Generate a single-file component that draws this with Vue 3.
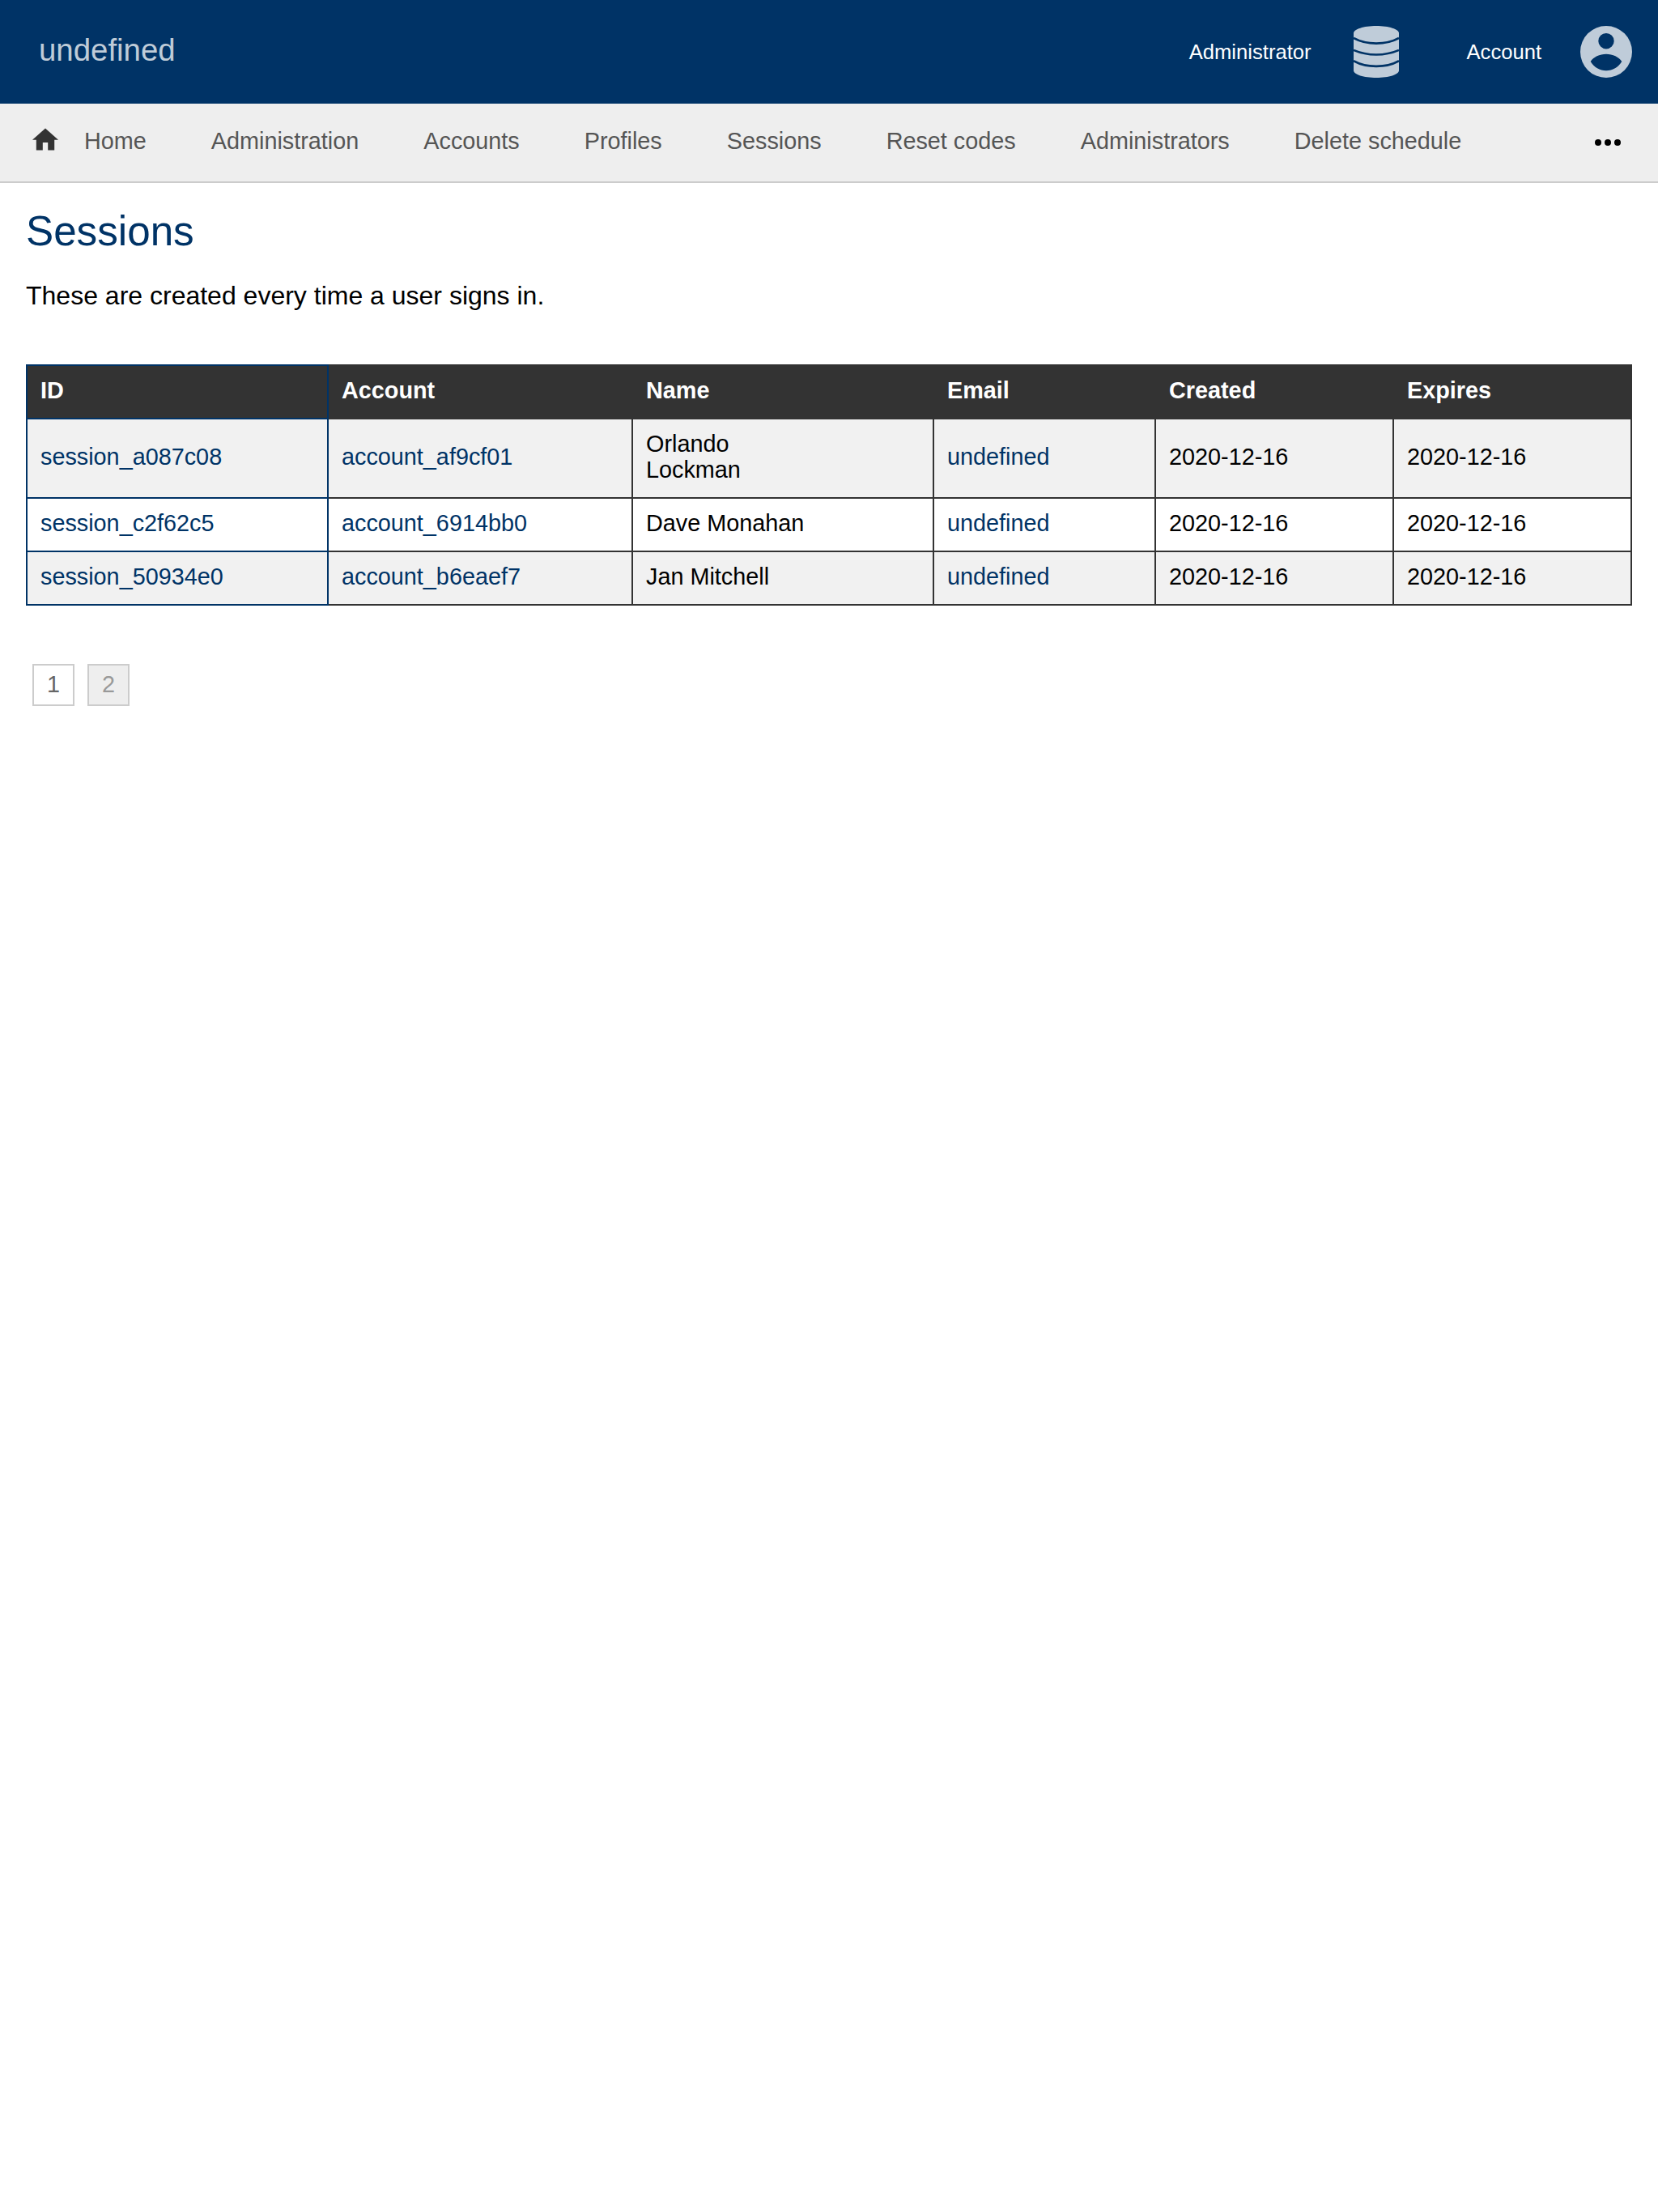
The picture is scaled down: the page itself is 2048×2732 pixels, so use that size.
<script setup>
const navItems = ['Home', 'Administration', 'Accounts', 'Profiles', 'Sessions', 'Reset codes', 'Administrators', 'Delete schedule']
const columns = ['ID', 'Account', 'Name', 'Email', 'Created', 'Expires']
const rows = [
  { id: 'session_a087c08', account: 'account_af9cf01', name: 'Orlando\nLockman' },
  { id: 'session_c2f62c5', account: 'account_6914bb0', name: 'Dave Monahan' },
  { id: 'session_50934e0', account: 'account_b6eaef7', name: 'Jan Mitchell' }
]
</script>

<template>
  <div class="page">
    <header class="topbar">
      <span class="brand">undefined</span>
      <div class="top-actions">
        <a class="top-link admin-link">
          <span>Administrator</span>
          <svg class="db-icon" viewBox="0 0 56 64" aria-hidden="true">
            <path class="db-body" d="M0 9C0 4 12.5 0 28 0S56 4 56 9V55C56 60 43.5 64 28 64S0 60 0 55Z" />
            <path class="db-line" d="M0 15C8 19.5 18 21.6 28 21.6S48 19.5 56 15" />
            <path class="db-line" d="M0 29.9C8 33.4 18 35.5 28 35.5S48 33.4 56 29.9" />
            <path class="db-line" d="M0 43.2C8 47.8 18 49.9 28 49.9S48 47.8 56 43.2" />
          </svg>
        </a>
        <a class="top-link account-link">
          <span>Account</span>
          <svg class="user-icon" viewBox="0 0 64 64" aria-hidden="true">
            <path fill="currentColor" fill-rule="evenodd" d="M32 0a32 32 0 1 1 0 64a32 32 0 1 1 0-64zM32 9a9.7 9.7 0 1 0 0 19.4a9.7 9.7 0 1 0 0-19.4zM12.7 44C16 38.5 24 34.7 32 34.7C40 34.7 48 38.5 51.3 44C47 51 40 55.3 32 55.3C24 55.3 17 51 12.7 44z" />
          </svg>
        </a>
      </div>
    </header>

    <nav class="navbar">
      <svg class="home-icon" viewBox="2 3 20 17" aria-hidden="true">
        <path fill="currentColor" d="M10 20v-6h4v6h5v-8h3L12 3 2 12h3v8z" />
      </svg>
      <a v-for="item in navItems" :key="item" class="nav-link">{{ item }}</a>
      <svg class="more-icon" viewBox="0 0 32 8" aria-hidden="true">
        <circle cx="4" cy="4" r="4" />
        <circle cx="16" cy="4" r="4" />
        <circle cx="28" cy="4" r="4" />
      </svg>
    </nav>

    <main class="content">
      <h1 class="title">Sessions</h1>
      <p class="intro">These are created every time a user signs in.</p>

      <table class="sessions">
        <colgroup>
          <col class="c-id" /><col class="c-account" /><col class="c-name" />
          <col class="c-email" /><col class="c-date" /><col class="c-date" />
        </colgroup>
        <thead>
          <tr><th v-for="col in columns" :key="col">{{ col }}</th></tr>
        </thead>
        <tbody>
          <tr v-for="row in rows" :key="row.id">
            <td><a>{{ row.id }}</a></td>
            <td><a>{{ row.account }}</a></td>
            <td class="name">{{ row.name }}</td>
            <td><a>undefined</a></td>
            <td>2020-12-16</td>
            <td>2020-12-16</td>
          </tr>
        </tbody>
      </table>

      <div class="pagination">
        <a class="page-btn">1</a>
        <a class="page-btn current">2</a>
      </div>
    </main>
  </div>
</template>

<style>
html, body { margin: 0; background: #fff; }
</style>

<style scoped>
.page {
  min-height: 2732px;
  font-family: "Liberation Sans", Arial, sans-serif;
  font-size: 32px;
  color: #000;
  background: #fff;
}
.topbar {
  height: 128px;
  background: #036;
  display: flex;
  align-items: center;
  justify-content: space-between;
  padding: 0 32px 0 48px;
}
.brand {
  font-size: 38.4px;
  color: rgba(255, 255, 255, 0.75);
  margin-bottom: 4px;
}
.top-actions {
  display: flex;
  align-items: center;
}
.top-link {
  display: flex;
  align-items: center;
  font-size: 25.6px;
  color: #fff;
}
.admin-link { gap: 52px; margin-right: 84px; }
.account-link { gap: 48px; }
.db-icon { width: 56px; height: 64px; display: block; }
.db-body { fill: #bfccd9; }
.db-line { fill: none; stroke: #036; stroke-width: 2.6; }
.user-icon { width: 64px; height: 64px; color: #bfccd9; display: block; }
.navbar {
  height: 92px;
  background: #eee;
  border-bottom: 2px solid #ccc;
  display: flex;
  align-items: center;
  padding: 0 46px 4px 40px;
  gap: 80px;
  font-size: 28.8px;
  color: #555;
}
.home-icon {
  width: 32px;
  height: 28px;
  color: #333;
  margin: 0 -48px 4px 0;
  flex: none;
}
.more-icon {
  width: 32px;
  height: 8px;
  fill: #000;
  margin: 4px 0 0 auto;
  flex: none;
}
.content { padding: 30px 32px 0; }
.title {
  margin: 0 0 32px;
  font-size: 51.2px;
  font-weight: 400;
  color: #036;
}
.intro { margin: 0 0 66px; }
.sessions {
  width: 1982px;
  table-layout: fixed;
  border-collapse: collapse;
  font-size: 28.8px;
  line-height: 32px;
}
.c-id { width: 372px; }
.c-account { width: 376px; }
.c-name { width: 372px; }
.c-email { width: 274px; }
.c-date { width: 294px; }
th, td {
  padding: 14px 16px 18px;
  border: 2px solid #333;
  text-align: left;
}
th {
  background: #333;
  color: #fff;
  font-weight: 700;
}
th:first-child, td:first-child { border-color: #036; }
tbody tr:nth-child(odd) td { background: #f1f1f1; }
td a { color: #036; }
.name { white-space: pre-line; }
.pagination {
  display: flex;
  gap: 16px;
  margin: 72px 0 0 8px;
}
.page-btn {
  box-sizing: border-box;
  width: 52px;
  height: 52px;
  padding-bottom: 2px;
  border: 2px solid #ccc;
  display: flex;
  align-items: center;
  justify-content: center;
  font-size: 28.8px;
  color: #666;
}
.page-btn.current { background: #eee; color: #999; }
</style>
